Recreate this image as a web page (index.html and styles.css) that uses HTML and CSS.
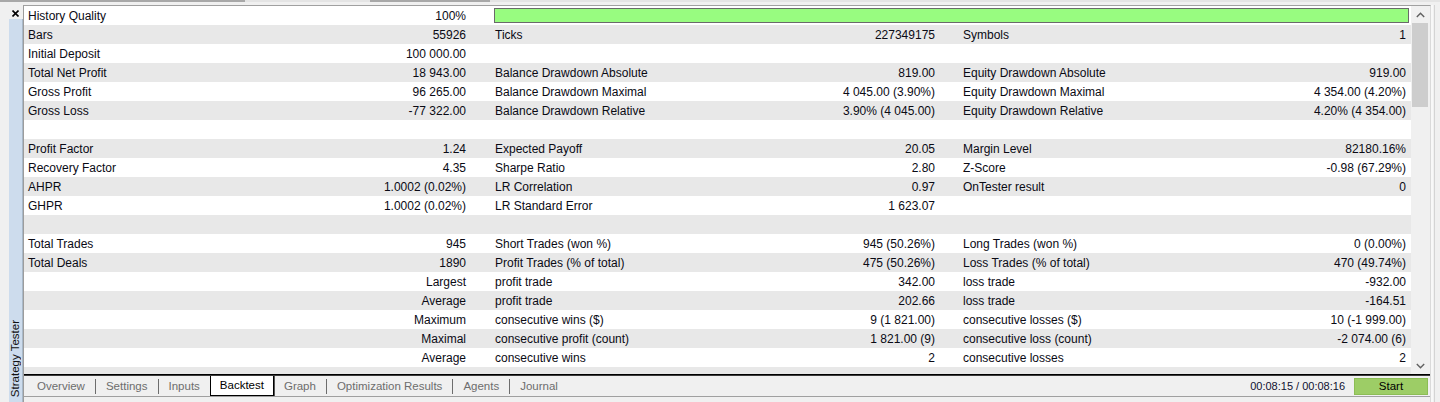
FILE: index.html
```html
<!DOCTYPE html>
<html>
<head>
<meta charset="utf-8">
<title>Strategy Tester - Backtest</title>
<link rel="stylesheet" href="styles.css">
</head>
<body>
<div class="topstrip"></div>
<div class="frame">
  <div class="side">
    <div class="close">
      <svg width="7" height="7" viewBox="0 0 7 7"><path d="M0.5 0.5 L6.5 6.5 M6.5 0.5 L0.5 6.5" stroke="#000" stroke-width="1.6"/></svg>
    </div>
    <div class="sidebar"><span class="side-title">Strategy Tester</span></div>
  </div>
  <div class="main">
    <div class="content">
      <div class="table">
        <div class="row"><span class="l">History Quality</span><span class="v">100%</span><div class="bar"></div></div>
        <div class="row"><span class="l">Bars</span><span class="v">55926</span><span class="l2">Ticks</span><span class="v">227349175</span><span class="l3">Symbols</span><span class="v3">1</span></div>
        <div class="row"><span class="l">Initial Deposit</span><span class="v">100 000.00</span><span class="l2"></span><span class="v"></span><span class="l3"></span><span class="v3"></span></div>
        <div class="row"><span class="l">Total Net Profit</span><span class="v">18 943.00</span><span class="l2">Balance Drawdown Absolute</span><span class="v">819.00</span><span class="l3">Equity Drawdown Absolute</span><span class="v3">919.00</span></div>
        <div class="row"><span class="l">Gross Profit</span><span class="v">96 265.00</span><span class="l2">Balance Drawdown Maximal</span><span class="v">4 045.00 (3.90%)</span><span class="l3">Equity Drawdown Maximal</span><span class="v3">4 354.00 (4.20%)</span></div>
        <div class="row"><span class="l">Gross Loss</span><span class="v">-77 322.00</span><span class="l2">Balance Drawdown Relative</span><span class="v">3.90% (4 045.00)</span><span class="l3">Equity Drawdown Relative</span><span class="v3">4.20% (4 354.00)</span></div>
        <div class="row"></div>
        <div class="row"><span class="l">Profit Factor</span><span class="v">1.24</span><span class="l2">Expected Payoff</span><span class="v">20.05</span><span class="l3">Margin Level</span><span class="v3">82180.16%</span></div>
        <div class="row"><span class="l">Recovery Factor</span><span class="v">4.35</span><span class="l2">Sharpe Ratio</span><span class="v">2.80</span><span class="l3">Z-Score</span><span class="v3">-0.98 (67.29%)</span></div>
        <div class="row"><span class="l">AHPR</span><span class="v">1.0002 (0.02%)</span><span class="l2">LR Correlation</span><span class="v">0.97</span><span class="l3">OnTester result</span><span class="v3">0</span></div>
        <div class="row"><span class="l">GHPR</span><span class="v">1.0002 (0.02%)</span><span class="l2">LR Standard Error</span><span class="v">1 623.07</span><span class="l3"></span><span class="v3"></span></div>
        <div class="row"></div>
        <div class="row"><span class="l">Total Trades</span><span class="v">945</span><span class="l2">Short Trades (won %)</span><span class="v">945 (50.26%)</span><span class="l3">Long Trades (won %)</span><span class="v3">0 (0.00%)</span></div>
        <div class="row"><span class="l">Total Deals</span><span class="v">1890</span><span class="l2">Profit Trades (% of total)</span><span class="v">475 (50.26%)</span><span class="l3">Loss Trades (% of total)</span><span class="v3">470 (49.74%)</span></div>
        <div class="row"><span class="l"></span><span class="v">Largest</span><span class="l2">profit trade</span><span class="v">342.00</span><span class="l3">loss trade</span><span class="v3">-932.00</span></div>
        <div class="row"><span class="l"></span><span class="v">Average</span><span class="l2">profit trade</span><span class="v">202.66</span><span class="l3">loss trade</span><span class="v3">-164.51</span></div>
        <div class="row"><span class="l"></span><span class="v">Maximum</span><span class="l2">consecutive wins ($)</span><span class="v">9 (1 821.00)</span><span class="l3">consecutive losses ($)</span><span class="v3">10 (-1 999.00)</span></div>
        <div class="row"><span class="l"></span><span class="v">Maximal</span><span class="l2">consecutive profit (count)</span><span class="v">1 821.00 (9)</span><span class="l3">consecutive loss (count)</span><span class="v3">-2 074.00 (6)</span></div>
        <div class="row"><span class="l"></span><span class="v">Average</span><span class="l2">consecutive wins</span><span class="v">2</span><span class="l3">consecutive losses</span><span class="v3">2</span></div>
        <div class="row"></div>
      </div>
      <div class="scroll">
        <div class="arrow">
          <svg width="9" height="6" viewBox="0 0 9 6"><path d="M0.8 5 L4.5 1.3 L8.2 5" fill="none" stroke="#606060" stroke-width="1.4"/></svg>
        </div>
        <div class="track"><div class="thumb"></div></div>
        <div class="arrow">
          <svg width="9" height="6" viewBox="0 0 9 6"><path d="M0.8 1 L4.5 4.7 L8.2 1" fill="none" stroke="#606060" stroke-width="1.4"/></svg>
        </div>
      </div>
    </div>
    <div class="tabbar">
      <div class="tabs">
        <span class="tab">Overview</span><span class="sep"></span>
        <span class="tab">Settings</span><span class="sep"></span>
        <span class="tab">Inputs</span>
        <span class="tab active">Backtest</span>
        <span class="tab">Graph</span><span class="sep"></span>
        <span class="tab">Optimization Results</span><span class="sep"></span>
        <span class="tab">Agents</span><span class="sep"></span>
        <span class="tab">Journal</span>
      </div>
      <div class="status">
        <span class="time">00:08:15 / 00:08:16</span>
        <span class="start">Start</span>
      </div>
    </div>
  </div>
  <div class="gutter"></div>
</div>
</body>
</html>
```
FILE: styles.css
```css
* { box-sizing: border-box; }
html, body { margin: 0; padding: 0; }
body {
  width: 1440px;
  height: 402px;
  overflow: hidden;
  background: #f0f0f0;
  font-family: "Liberation Sans", Arial, sans-serif;
  font-size: 12px;
  color: #000;
}
.topstrip {
  height: 5px;
  background:
    linear-gradient(to right, #a8a8a8 0, #a8a8a8 245px, #e4e4e4 245px, #e4e4e4 370px, #a8a8a8 370px, #a8a8a8 490px, #e4e4e4 490px) top left / 100% 2px no-repeat;
}
.frame {
  display: flex;
  height: 397px;
}
.side {
  width: 23px;
  display: flex;
  flex-direction: column;
  align-items: flex-end;
}
.close {
  height: 14px;
  width: 14px;
  display: flex;
  align-items: center;
  justify-content: center;
  padding-top: 2px;
  padding-right: 2px;
}
.close svg { display: block; }
.sidebar {
  width: 14px;
  flex: 1;
  background: #cddced;
  border-right: 1px solid #a9b9c9;
  display: flex;
  flex-direction: column;
  justify-content: flex-end;
  align-items: center;
  padding-bottom: 5px;
}
.side-title {
  writing-mode: vertical-rl;
  transform: rotate(180deg);
  font-size: 11.5px;
  line-height: 13px;
  color: #111;
  white-space: nowrap;
}
.main {
  width: 1408px;
  border-left: 1px solid #9c9c9c;
  border-top: 1px solid #a0a0a0;
  border-right: 1px solid #dadada;
  display: flex;
  flex-direction: column;
}
.content {
  display: flex;
  height: 369px;
  border-bottom: 1px solid #000;
}
.table {
  width: 1387px;
  overflow: hidden;
  background: #fff;
}
.row {
  display: grid;
  grid-template-columns: 276px 170px 290px 179px 241px 231px;
  height: 19px;
  line-height: 21px;
  overflow: hidden;
  white-space: pre;
  color: #0a0a14;
}
.row:nth-child(even) { background: #e8e8e8; }
.l { padding-left: 4px; }
.v { text-align: right; padding-right: 4px; }
.l2 { padding-left: 25px; }
.l3 { padding-left: 24px; }
.v3 { text-align: right; padding-right: 5px; }
.bar {
  grid-column: 3 / 7;
  margin: 2px 2px 2px 24px;
  height: 15px;
  background: #98fc80;
  border: 1px solid #6a6a6a;
}
.scroll {
  width: 19px;
  display: flex;
  flex-direction: column;
  background: #f0f0f0;
}
.arrow {
  height: 17px;
  display: flex;
  align-items: center;
  justify-content: center;
}
.arrow svg { display: block; }
.track {
  flex: 1;
  padding: 0 2px 0 1px;
}
.thumb {
  height: 84px;
  background: #cdcdcd;
}
.tabbar {
  height: 22px;
  border-top: 1px solid #3a3a3a;
  border-bottom: 1px solid #a0a0a0;
  display: flex;
  justify-content: space-between;
  align-items: stretch;
}
.tabs {
  display: flex;
  align-items: center;
  padding-left: 3px;
}
.tab {
  font-size: 11.5px;
  color: #6d6d6d;
  padding: 0 10px;
  line-height: 20px;
  height: 20px;
}
.tab.active {
  color: #000;
  background: #fff;
  border: 1px solid #000;
  border-top: none;
  box-shadow: 1px 0 0 #555;
  padding: 0 9px 0 9px;
  margin-right: 0;
  line-height: 19px;
  align-self: flex-start;
}
.sep {
  width: 1px;
  height: 15px;
  background: #6d6d6d;
}
.status {
  display: flex;
  align-items: center;
  padding-right: 2px;
}
.time {
  font-size: 11px;
  color: #101030;
  margin-right: 9px;
}
.start {
  width: 74px;
  height: 17px;
  background: #9dcd66;
  border: 1px solid #8cbd55;
  text-align: center;
  font-size: 11.5px;
  line-height: 15px;
  color: #000;
}
.gutter {
  flex: 1;
  border-left: 2px solid #f8f8f8;
  position: relative;
  background: linear-gradient(to right, transparent 0, transparent 1px, #d4d4d4 1px, #d4d4d4 2px, transparent 2px);
}
```
